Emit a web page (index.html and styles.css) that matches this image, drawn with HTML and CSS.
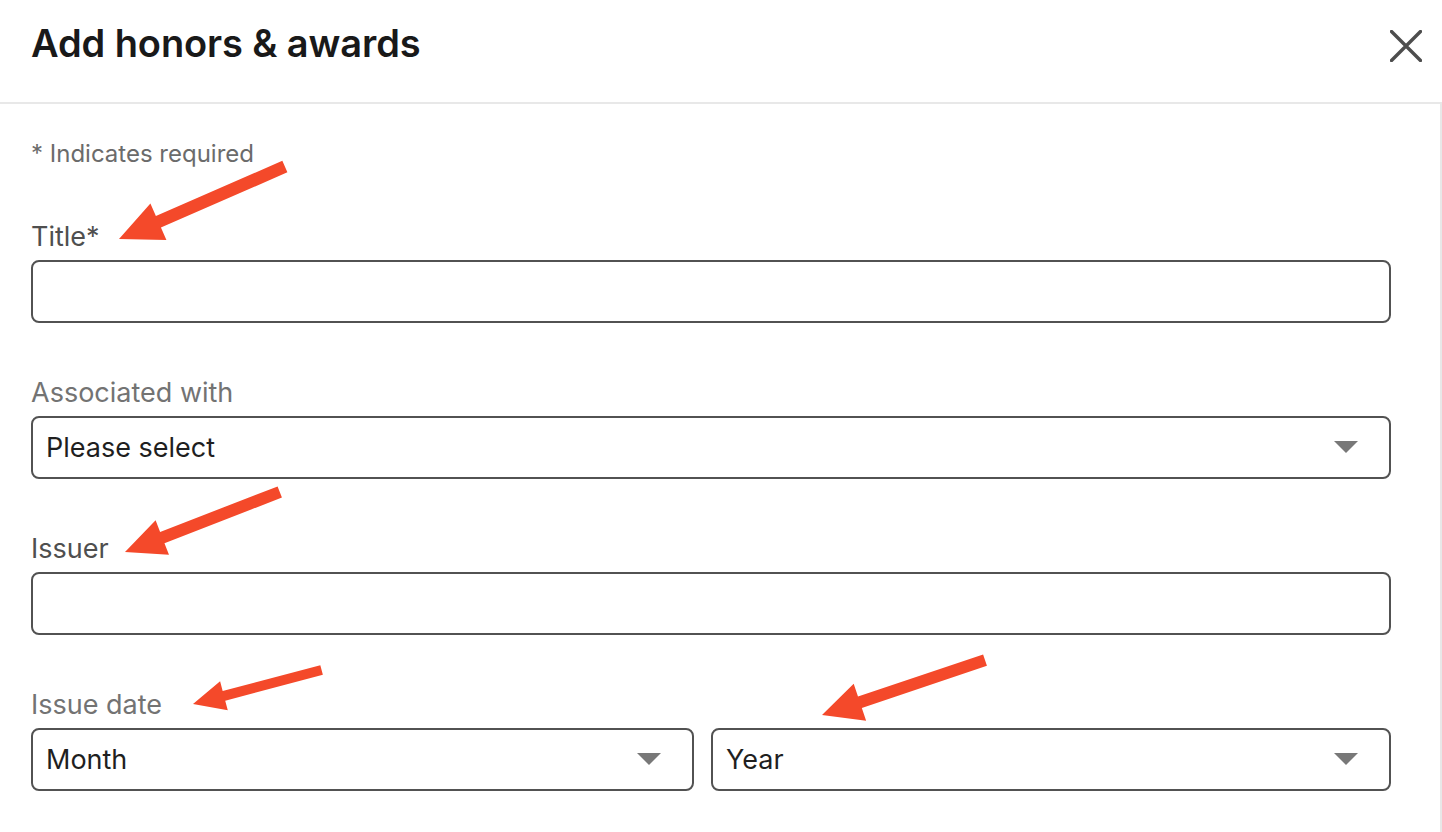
FILE: index.html
```html
<!DOCTYPE html>
<html lang="en">
<head>
<meta charset="utf-8">
<title>Add honors &amp; awards</title>
<link rel="stylesheet" href="styles.css">
</head>
<body>
<div class="modal">
  <header class="modal-header">
    <h2 class="modal-title">Add honors &amp; awards</h2>
    <button class="close-btn" aria-label="Dismiss">
      <svg width="32" height="32" viewBox="0 0 32 32"><path d="M1.5 1.5 L30.5 30.5 M30.5 1.5 L1.5 30.5" stroke="#4d4d4d" stroke-width="3.4" stroke-linecap="round" fill="none"/></svg>
    </button>
  </header>
  <section class="modal-body">
    <p class="required-note">* Indicates required</p>
    <div class="field">
      <label class="label label-dark">Title*</label>
      <input class="text-input" type="text">
    </div>
    <div class="field">
      <label class="label label-light">Associated with</label>
      <div class="select"><span class="select-text">Please select</span><span class="caret"></span></div>
    </div>
    <div class="field">
      <label class="label label-dark">Issuer</label>
      <input class="text-input" type="text">
    </div>
    <div class="field">
      <label class="label label-light">Issue date</label>
      <div class="date-row">
        <div class="select"><span class="select-text">Month</span><span class="caret"></span></div>
        <div class="select"><span class="select-text">Year</span><span class="caret"></span></div>
      </div>
    </div>
  </section>
</div>
<svg class="annotations" width="1442" height="832" viewBox="0 0 1442 832">
  <g fill="#f4492a">
    <polygon transform="translate(119,239) rotate(-23.6)" points="0,0 43,-20 43,-6.3 181,-6.3 181,6.3 43,6.3 43,20"/>
    <polygon transform="translate(125,552) rotate(-21.2)" points="0,0 40,-18.5 40,-6 166,-6 166,6 40,6 40,18.5"/>
    <polygon transform="translate(193,704) rotate(-14.8)" points="0,0 32,-15 32,-5 133,-5 133,5 32,5 32,15"/>
    <polygon transform="translate(822,715) rotate(-18.6)" points="0,0 40,-19.5 40,-6 172,-6 172,6 40,6 40,19.5"/>
  </g>
</svg>
</body>
</html>
```
FILE: styles.css
```css
* { box-sizing: border-box; }
html, body {
  margin: 0;
  padding: 0;
  background: #ffffff;
}
body {
  width: 1442px;
  height: 832px;
  overflow: hidden;
  position: relative;
  font-family: Inter, "Noto Sans", "Liberation Sans", sans-serif;
}
.modal {
  width: 1442px;
}
.modal-header {
  height: 102px;
  display: flex;
  justify-content: space-between;
  align-items: flex-start;
  padding: 20px 20px 0 31px;
}
.modal-title {
  margin: 0;
  font-size: 38px;
  line-height: 46px;
  font-weight: 600;
  letter-spacing: -0.1px;
  color: #191919;
}
.close-btn {
  margin-top: 10px;
  width: 32px;
  height: 32px;
  padding: 0;
  border: 0;
  background: transparent;
  display: block;
}
.close-btn svg { display: block; }
.modal-body {
  border-top: 2px solid #e8e8e8;
  border-right: 2px solid #e8e8e8;
  padding: 36px 49px 0 31px;
  height: 730px;
  display: flex;
  flex-direction: column;
  gap: 53px;
}
.required-note {
  margin: 0;
  font-size: 24px;
  line-height: 27px;
  color: #6b6b6b;
}
.field {
  display: flex;
  flex-direction: column;
}
.label {
  font-size: 27px;
  line-height: 33px;
  margin-bottom: 7px;
}
.label-dark { color: #4f4f4f; }
.label-light { color: #737373; }
.text-input {
  display: block;
  width: 100%;
  height: 63px;
  border: 2px solid #525252;
  border-radius: 8px;
  padding: 0 14px;
  font: inherit;
  font-size: 27px;
  color: #1f1f1f;
  background: #fff;
  outline: none;
}
.select {
  height: 63px;
  border: 2px solid #525252;
  border-radius: 8px;
  padding: 0 31px 0 13px;
  display: flex;
  align-items: center;
  justify-content: space-between;
  background: #fff;
}
.select-text {
  font-size: 27px;
  color: #1f1f1f;
}
.caret {
  width: 0;
  height: 0;
  border-left: 12.5px solid transparent;
  border-right: 12.5px solid transparent;
  border-top: 12px solid #787878;
  margin-top: -2px;
}
.date-row {
  display: grid;
  grid-template-columns: 663fr 680fr;
  gap: 17px;
}
.annotations {
  position: absolute;
  left: 0;
  top: 0;
  pointer-events: none;
}
```
